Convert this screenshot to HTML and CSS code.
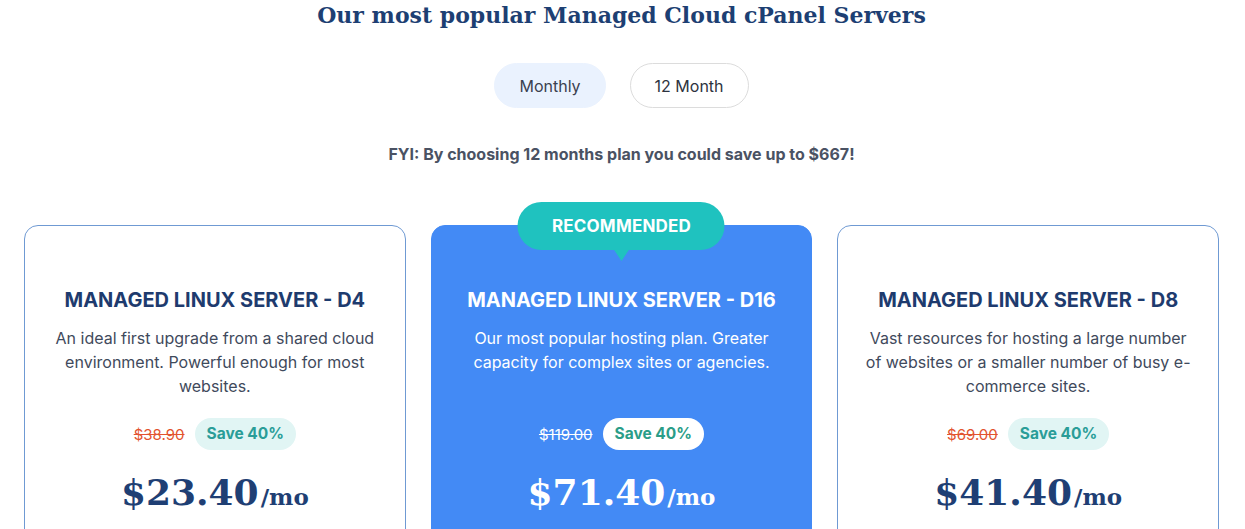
FILE: index.html
```html
<!DOCTYPE html>
<html lang="en">
<head>
  <meta charset="UTF-8">
  <meta name="viewport" content="width=device-width, initial-scale=1.0">
  <title>Managed Cloud cPanel Servers</title>
  <link rel="stylesheet" href="styles.css">
</head>
<body>
  <section class="pricing">
    <h2 class="pricing-title">Our most popular Managed Cloud cPanel Servers</h2>

    <div class="term-toggle">
      <button class="term-btn active">Monthly</button>
      <button class="term-btn">12 Month</button>
    </div>

    <p class="fyi">FYI: By choosing 12 months plan you could save up to $667!</p>

    <div class="plans">
      <!-- D4 -->
      <div class="plan">
        <h3 class="plan-name">MANAGED LINUX SERVER - D4</h3>
        <p class="plan-desc">An ideal first upgrade from a shared cloud environment. Powerful enough for most websites.</p>
        <div class="plan-save">
          <span class="old-price">$38.90</span>
          <span class="save-badge">Save 40%</span>
        </div>
        <div class="plan-price">$23.40<span class="per">/mo</span></div>
      </div>

      <!-- D16 -->
      <div class="plan featured">
        <div class="ribbon">RECOMMENDED</div>
        <h3 class="plan-name">MANAGED LINUX SERVER - D16</h3>
        <p class="plan-desc">Our most popular hosting plan. Greater capacity for complex sites or agencies.</p>
        <div class="plan-save">
          <span class="old-price">$119.00</span>
          <span class="save-badge">Save 40%</span>
        </div>
        <div class="plan-price">$71.40<span class="per">/mo</span></div>
      </div>

      <!-- D8 -->
      <div class="plan">
        <h3 class="plan-name">MANAGED LINUX SERVER - D8</h3>
        <p class="plan-desc">Vast resources for hosting a large number of websites or a smaller number of busy e-commerce sites.</p>
        <div class="plan-save">
          <span class="old-price">$69.00</span>
          <span class="save-badge">Save 40%</span>
        </div>
        <div class="plan-price">$41.40<span class="per">/mo</span></div>
      </div>
    </div>
  </section>
</body>
</html>
```

FILE: styles.css
```css
body {
  margin: 0;
  padding: 0;
  background: #ffffff;
  font-family: Inter, "Noto Sans", sans-serif;
  overflow: hidden;
}

.pricing {
  padding: 0 26px 0 24px;
  text-align: center;
}

.pricing-title {
  margin: 0;
  font-family: "DejaVu Serif", "Liberation Serif", serif;
  font-size: 22px;
  line-height: 30px;
  font-weight: 700;
  color: #1d3f73;
}

.term-toggle {
  display: flex;
  justify-content: center;
  gap: 24px;
  margin-top: 33px;
}

.term-btn {
  height: 45px;
  padding: 0 24px;
  border-radius: 23px;
  border: 1px solid #dcdcdc;
  background: #ffffff;
  font-family: Inter, sans-serif;
  font-size: 16px;
  color: #2d3340;
  cursor: pointer;
}

.term-btn.active {
  background: #eaf2fe;
  border-color: #eaf2fe;
  color: #3a4150;
}

.fyi {
  margin: 35px 0 0 0;
  font-size: 16px;
  line-height: 22px;
  font-weight: 700;
  color: #4a5263;
}

.plans {
  display: grid;
  grid-template-columns: repeat(3, 1fr);
  gap: 25px;
  margin-top: 60px;
}

.plan {
  position: relative;
  border: 1px solid #6f9ad3;
  border-radius: 14px;
  padding: 61px 24px 40px;
  background: #ffffff;
}

.plan.featured {
  background: #438af5;
  border-color: #438af5;
}

.ribbon {
  position: absolute;
  top: -24px;
  left: 50%;
  transform: translateX(-50%);
  width: 207px;
  height: 48px;
  line-height: 48px;
  border-radius: 24px;
  background: #1fc2bf;
  color: #ffffff;
  font-size: 17px;
  font-weight: 700;
  letter-spacing: 0.2px;
}

.ribbon::after {
  content: "";
  position: absolute;
  left: 50%;
  bottom: -11px;
  margin-left: -8px;
  border-left: 8px solid transparent;
  border-right: 8px solid transparent;
  border-top: 12px solid #1fc2bf;
}

.plan-name {
  margin: 0;
  font-size: 20px;
  line-height: 26px;
  font-weight: 700;
  color: #1e3b6e;
}

.plan-desc {
  margin: 13px 0 0 0;
  min-height: 72px;
  font-size: 16px;
  line-height: 24px;
  color: #3f4a5c;
}

.plan-save {
  display: flex;
  justify-content: center;
  align-items: center;
  gap: 10px;
  margin-top: 20px;
}

.old-price {
  font-size: 15px;
  color: #e2532f;
  text-decoration: line-through;
}

.save-badge {
  height: 32px;
  line-height: 32px;
  padding: 0 12px;
  border-radius: 16px;
  background: #e1f5f4;
  color: #2a9d98;
  font-size: 15.5px;
  font-weight: 700;
}

.plan-price {
  margin-top: 18px;
  font-family: "DejaVu Serif", "Liberation Serif", serif;
  font-size: 36px;
  line-height: 48px;
  font-weight: 700;
  color: #1f3f74;
}

.plan-price .per {
  font-size: 23px;
  margin-left: 2px;
}

.featured .plan-name,
.featured .plan-desc,
.featured .plan-price {
  color: #ffffff;
}

.featured .old-price {
  color: #ffffff;
}

.featured .save-badge {
  background: #ffffff;
  color: #2a9d88;
}
```
